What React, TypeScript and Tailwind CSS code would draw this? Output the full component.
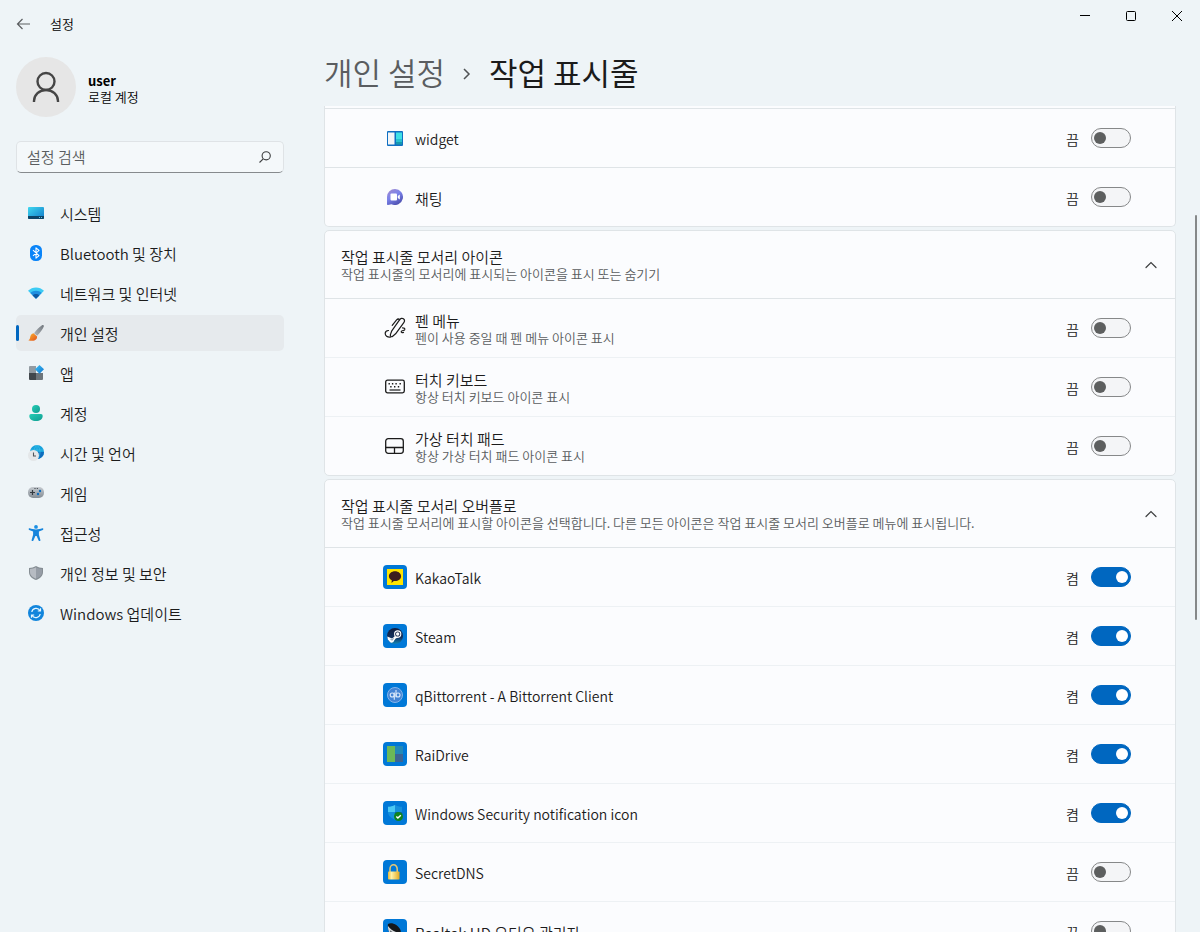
import { useId, useState } from "react";
import type { ReactNode } from "react";

function SystemIcon() {
  return (
    <svg width="16" height="16" viewBox="0 0 16 16">
      <defs>
        <linearGradient id="sys" x1="0" y1="0" x2="1" y2="1">
          <stop offset="0" stopColor="#3fd8f0" />
          <stop offset="1" stopColor="#1079c9" />
        </linearGradient>
      </defs>
      <rect y="2" width="16" height="12" rx="1" fill="url(#sys)" />
      <path d="M0 11h16v2a1 1 0 0 1-1 1H1a1 1 0 0 1-1-1z" fill="#0c4468" />
      <path d="M11 12h1v1h-1zM13 12h1v1h-1z" fill="#5fc6ea" />
    </svg>
  );
}

function BluetoothIcon() {
  return (
    <svg width="16" height="16" viewBox="0 0 16 16">
      <rect x="2" width="12" height="16" rx="5.5" fill="#0a84f8" />
      <path d="M5 5.2l6 5.4-3 2.6V2.8l3 2.6-6 5.4" fill="none" stroke="#fff" strokeWidth="1.1" strokeLinejoin="round" />
    </svg>
  );
}

function NetworkIcon() {
  return (
    <svg width="16" height="16" viewBox="0 0 16 16">
      <path d="M0 5.8C4.400 1.300 11.600 1.300 16 5.800L8 13.800z" fill="#3ccbf4" />
      <path d="M2.300 8.100c3.200-3.200 8.200-3.200 11.400 0L8 13.800z" fill="#1e8fe0" />
      <path d="M4.600 10.400c1.900-1.900 4.900-1.900 6.800 0L8 13.800z" fill="#0c59a4" />
    </svg>
  );
}

function BrushIcon() {
  return (
    <svg width="16" height="16" viewBox="0 0 16 16">
      <defs>
        <linearGradient id="handle" x1="1" y1="0" x2="0" y2="1">
          <stop offset="0" stopColor="#70767c" />
          <stop offset="1" stopColor="#b4b9be" />
        </linearGradient>
        <linearGradient id="bristle" x1="0" y1="0" x2="1" y2="1">
          <stop offset="0" stopColor="#fbb52f" />
          <stop offset="1" stopColor="#e2511c" />
        </linearGradient>
      </defs>
      <path d="M14 .3c1.200-.7 2.300.3 1.700 1.500-1.300 2.800-3.700 6.200-6.500 8.900L6 8.200C8.600 5 11.500 1.800 14 .3z" fill="url(#handle)" />
      <path d="M5.500 8.300l3.600 3.200c.2 2.400-1.800 4.300-4.600 4.300-1.800 0-3.300 0-4.200-.5 1.400-.6 1.700-1.800 1.900-3.200.3-2 1.500-3.500 3.300-3.800z" fill="url(#bristle)" />
    </svg>
  );
}

function AppsIcon() {
  return (
    <svg width="16" height="16" viewBox="0 0 16 16">
      <defs>
        <linearGradient id="diamond" x1="0" y1="0" x2="1" y2="1">
          <stop offset="0" stopColor="#3cc1f5" />
          <stop offset="1" stopColor="#0f74cf" />
        </linearGradient>
      </defs>
      <path d="M2 1h6v7H1V2a1 1 0 0 1 1-1z" fill="#929ba2" />
      <path d="M1 8h7v7H2a1 1 0 0 1-1-1z" fill="#41474c" />
      <path d="M8 8h7v6a1 1 0 0 1-1 1H8z" fill="#6d757b" />
      <path d="M11.500 0l4.500 4.300-4.500 4.500L7 4.300z" fill="url(#diamond)" />
    </svg>
  );
}

function AccountIcon() {
  return (
    <svg width="16" height="16" viewBox="0 0 16 16">
      <defs>
        <linearGradient id="acct" x1="0" y1="0" x2="1" y2="1">
          <stop offset="0" stopColor="#25cdb5" />
          <stop offset="1" stopColor="#109c91" />
        </linearGradient>
      </defs>
      <circle cx="8" cy="4" r="4" fill="url(#acct)" />
      <path d="M3 9h10a1.700 1.700 0 0 1 1.700 1.700C14.700 14 12 16 8 16s-6.700-2-6.700-5.300A1.700 1.700 0 0 1 3 9z" fill="url(#acct)" />
    </svg>
  );
}

function TimeIcon() {
  return (
    <svg width="16" height="16" viewBox="0 0 16 16">
      <circle cx="9" cy="7" r="7" fill="#17a2dc" />
      <path d="M16 7a7 7 0 0 1-7 7l1-7z" fill="#0f6cbd" />
      <path d="M3 5h12.500M9 0v14M9 0c4 3 4 11 0 14M9 0C5 3 5 11 9 14" fill="none" stroke="#3fc4e8" strokeWidth=".6" />
      <circle cx="5.500" cy="10.500" r="5.500" fill="#e4e7e9" />
      <path d="M5.500 7.500v3.500H8" fill="none" stroke="#4f555a" strokeWidth="1.100" />
    </svg>
  );
}

function GameIcon() {
  return (
    <svg width="16" height="16" viewBox="0 0 16 16">
      <defs>
        <linearGradient id="pad" x1="0" y1="0" x2="0" y2="1">
          <stop offset="0" stopColor="#c6cbd0" />
          <stop offset="1" stopColor="#858d95" />
        </linearGradient>
      </defs>
      <rect y="2" width="16" height="11" rx="5" fill="url(#pad)" />
      <path d="M2 7.500h5M4.500 5v5M6.500 3.500h1M8.800 3.500h1" stroke="#333a40" strokeWidth="1.200" />
      <circle cx="12" cy="6" r="1.200" fill="#0f6cbd" />
      <circle cx="10" cy="9" r="1.200" fill="#0f6cbd" />
    </svg>
  );
}

function AccessIcon() {
  return (
    <svg width="16" height="16" viewBox="0 0 16 16">
      <circle cx="8" cy="1.900" r="1.900" fill="#1b8fe3" />
      <path d="M1.700 3.300C3.500 3.800 5.600 4.500 8 4.500s4.500-.7 6.300-1.200c1.100-.3 1.500 1.200.5 1.600l-3.900 1.500v3.300l1.500 5.200c.3 1.200-1.400 1.700-1.800.6L8.600 11H7.400l-2 4.500c-.4 1.100-2.100.6-1.800-.6l1.500-5.200V6.400L1.200 4.900c-1-.4-.6-1.900.5-1.600z" fill="#1584dc" />
    </svg>
  );
}

function ShieldIcon() {
  return (
    <svg width="16" height="16" viewBox="0 0 16 16">
      <path d="M8 1c2 1.300 4.500 2 7 2v4c0 4-3 6.600-7 8-4-1.400-7-4-7-8V3c2.500 0 5-.7 7-2z" fill="#858d93" />
      <path d="M8 2.300V13.700C4.700 12.500 2 10.200 2 7V3.900c2 0 4.200-.5 6-1.600z" fill="#b6bbc2" />
      <path d="M8 2.300c1.800 1.100 4 1.600 6 1.600V7c0 3.200-2.700 5.500-6 6.700z" fill="#969da6" />
    </svg>
  );
}

function UpdateIcon() {
  return (
    <svg width="16" height="16" viewBox="0 0 16 16">
      <circle cx="8" cy="8" r="8" fill="#1285dc" />
      <path d="M3.800 7A4.400 4.400 0 0 1 12 5.700M12.500 3.300V6H9.800M12.200 9A4.400 4.400 0 0 1 4 10.300M3.500 12.700V10h2.700" fill="none" stroke="#e8f7ff" strokeWidth="1.200" />
    </svg>
  );
}

function WidgetIcon() {
  return (
    <svg width="16" height="16" viewBox="0 0 16 16">
      <rect y="1" width="16" height="15" rx="1" fill="#0f6fc2" />
      <rect x="1" y="2.500" width="6.500" height="12" fill="#f3f5f7" />
      <path d="M9 2.500h6V9H9z" fill="#3fe0e6" />
      <path d="M9 9h6v3H9z" fill="#27c0d0" />
      <path d="M9 12h6v2.500H9z" fill="#1598ae" />
    </svg>
  );
}

function ChatIcon() {
  return (
    <svg width="16" height="16" viewBox="0 0 16 16">
      <defs>
        <linearGradient id="chat" x1="0" y1="0" x2=".6" y2="1">
          <stop offset="0" stopColor="#a58acb" />
          <stop offset=".5" stopColor="#7b83eb" />
          <stop offset="1" stopColor="#4f52b2" />
        </linearGradient>
      </defs>
      <path d="M8 0a8 8 0 1 1-3.500 15.200L1 16c-.7.100-1-.3-1-1V8a8 8 0 0 1 8-8z" fill="url(#chat)" />
      <rect x="3.500" y="4.500" width="6.500" height="7" rx="1" fill="#fff" />
      <path d="M10.800 7l2-1.600v5.200l-2-1.600z" fill="#fff" />
    </svg>
  );
}

function PenIcon() {
  return (
    <svg width="22" height="22" viewBox="0 0 22 22" fill="none" stroke="#1b1b1b" strokeWidth="1.200" strokeLinecap="round" strokeLinejoin="round">
      <path d="M7 19.600c-.7-.5-.8-1.300-.5-2.200l1.300-3.600L15.700 2.700c1-1.500 2.600-1.700 3.700-.9 1.200.9 1.400 2.400.4 3.800l-8.200 11.200-2.900 2.400c-.6.500-1.200.7-1.700.4z" />
      <path d="M15.800 2.700c-1-.9-2.200-.9-3.200.2L8.200 8.300" />
      <path d="M4.500 13.500c-2 .2-3.300 1.300-3.300 2.900 0 2.300 2 4 5.200 3.700" />
      <path d="M18.500 10.800c1.600 0 2.700.8 2.200 1.900-.5 1-2.800.6-3.400 1.700-.4.900.8 1.500 2.200 1" />
    </svg>
  );
}

function KeyboardIcon() {
  return (
    <svg width="20" height="16" viewBox="0 0 20 16" fill="none" stroke="#1b1b1b">
      <rect x=".7" y="1.200" width="18.600" height="12.600" rx="1.800" strokeWidth="1.300" />
      <path d="M3.500 4.800h1.400M6.900 4.800h1.400M10.400 4.800h1.400M14.500 4.800h1.400M5.200 7.800h1.400M9 7.800h1.400M12.800 7.800h1.400" strokeWidth="1.500" />
      <path d="M4.500 11h11" strokeWidth="1.200" />
    </svg>
  );
}

function TouchpadIcon() {
  return (
    <svg width="20" height="16" viewBox="0 0 20 16" fill="none" stroke="#1b1b1b" strokeWidth="1.300">
      <rect x=".7" y=".7" width="17.600" height="14.600" rx="2.500" />
      <path d="M.7 9.500h17.600M9.500 9.500v5.800" />
    </svg>
  );
}

function Tile({ children }: { children: ReactNode }) {
  return (
    <span className="flex size-6 items-center justify-center rounded bg-[#0078d7]">
      <svg width="16" height="16" viewBox="0 0 16 16">{children}</svg>
    </span>
  );
}

const kakao = (
  <Tile>
    <path d="M0 0h16v16H0z" fill="#fee500" />
    <path d="M8 2.300c3.400 0 6.100 2.200 6.100 4.900S11.400 12.100 8 12.100l-1.200-.1-2.300 1.900.3-2.600C3 10.400 1.900 8.900 1.900 7.200c0-2.700 2.700-4.900 6.100-4.900z" fill="#3b1e1e" />
  </Tile>
);

const steam = (
  <Tile>
    <defs>
      <linearGradient id="steam" x1="0" y1="0" x2="0" y2="1">
        <stop offset="0" stopColor="#111d3e" />
        <stop offset=".6" stopColor="#12315f" />
        <stop offset="1" stopColor="#1387b8" />
      </linearGradient>
    </defs>
    <circle cx="8" cy="8" r="8" fill="url(#steam)" />
    <path d="M.3 8.500l4.700 2 2.300-1.700 1.500-3.600 4.200 3.600-4.300 1.800-1.500 2a2.600 2.600 0 0 1-5 .3L.8 11.500z" fill="#fff" />
    <circle cx="10.700" cy="6" r="3.100" fill="#16264b" stroke="#fff" strokeWidth="1.100" />
    <circle cx="10.700" cy="6" r="1.700" fill="#fff" />
    <path d="M3.500 11.300l1.300.6a1.200 1.200 0 0 0 1.300-1.700" fill="none" stroke="#35587f" strokeWidth=".7" />
  </Tile>
);

const qbittorrent = (
  <Tile>
    <circle cx="8" cy="8" r="7.500" fill="#4384d4" stroke="#86b5ea" />
    <g fill="none" stroke="#dceafa" strokeWidth="1.100">
      <circle cx="5.200" cy="8" r="2" />
      <path d="M7.300 5.600v7.200M9 3v7.200" />
      <circle cx="11" cy="8" r="2" />
    </g>
  </Tile>
);

const raidrive = (
  <Tile>
    <path d="M0 0h8v16H0z" fill="#6cb957" />
    <path d="M8 0h8v8H8z" fill="#2389b6" />
    <path d="M8 8h8v8H8z" fill="#3d6594" />
  </Tile>
);

const security = (
  <Tile>
    <path d="M8 0c2 1.200 4.300 1.800 7 1.800V7c0 3.800-3 6-7 7.500C4 13 1 10.800 1 7V1.800C3.700 1.800 6 1.200 8 0z" fill="#1590dc" />
    <path d="M8 0v7H1V1.800C3.700 1.800 6 1.200 8 0z" fill="#4ac8f3" />
    <path d="M8 7h7c0 3.800-3 6-7 7.500z" fill="#0c63b0" />
    <circle cx="11.500" cy="11.500" r="4.500" fill="#0f8420" />
    <path d="M9.300 11.500l1.600 1.600 2.900-2.900" fill="none" stroke="#fff" strokeWidth="1.400" />
  </Tile>
);

const secretDns = (
  <Tile>
    <defs>
      <linearGradient id="lock" x1="0" y1="0" x2="1" y2="0">
        <stop offset="0" stopColor="#e9b832" />
        <stop offset=".3" stopColor="#fff3a8" />
        <stop offset="1" stopColor="#e2a91f" />
      </linearGradient>
    </defs>
    <path d="M3 8V5a3.600 4.200 0 0 1 7.200 0v3" fill="none" stroke="#e8c873" strokeWidth="1.500" />
    <rect x="1" y="7.500" width="11.500" height="8" rx=".8" fill="url(#lock)" />
  </Tile>
);

const realtek = (
  <Tile>
    <path d="M1 1c4-2 10 1 12.500 6L15 16H7C3 12 0 5 1 1z" fill="#15181b" />
    <path d="M1 3c2 3 5 5 8 6l-1 7C4 13 .5 8 1 3z" fill="#d5d9dc" />
    <path d="M3 7.500c1 0 3 2 4 4l-1 2C4.500 12 3 9.500 3 7.500z" fill="#5b6166" />
  </Tile>
);

const navItems: { label: string; icon: ReactNode; active?: boolean }[] = [
  { label: "시스템", icon: <SystemIcon /> },
  { label: "Bluetooth 및 장치", icon: <BluetoothIcon /> },
  { label: "네트워크 및 인터넷", icon: <NetworkIcon /> },
  { label: "개인 설정", icon: <BrushIcon />, active: true },
  { label: "앱", icon: <AppsIcon /> },
  { label: "계정", icon: <AccountIcon /> },
  { label: "시간 및 언어", icon: <TimeIcon /> },
  { label: "게임", icon: <GameIcon /> },
  { label: "접근성", icon: <AccessIcon /> },
  { label: "개인 정보 및 보안", icon: <ShieldIcon /> },
  { label: "Windows 업데이트", icon: <UpdateIcon /> },
];

type RowProps = { icon: ReactNode; title: string; description?: string; on?: boolean; strong?: boolean };

function Row({ icon, title, description, on = false, strong = false }: RowProps) {
  const id = useId();
  const [checked, setChecked] = useState(on);
  const titleSize = /[가-힣]/.test(title) ? "text-[15px]" : "text-[14px]";
  return (
    <div className={`flex h-[59px] items-center gap-2 border-t pr-11 pl-[58px] ${strong ? "border-[#dfe4e7]" : "border-[#edf1f4]"}`}>
      <span className="flex size-6 shrink-0 items-center justify-center">{icon}</span>
      <label htmlFor={id} className="flex flex-1 flex-col pt-0.5">
        <span className={`${titleSize} leading-[17px] text-[#1b1b1b]`}>{title}</span>
        {description && <span className="text-[13px] leading-[17px] text-[#5a5d60]">{description}</span>}
      </label>
      <span className="pt-0.5 text-[14px] leading-[17px] text-[#1b1b1b]">{checked ? "켬" : "끔"}</span>
      <input
        id={id}
        type="checkbox"
        role="switch"
        checked={checked}
        onChange={(e) => setChecked(e.target.checked)}
        className="ml-1 flex h-5 w-10 shrink-0 appearance-none items-center rounded-full border border-[#868889] bg-[#f4f5f7] px-0.5 before:size-3 before:rounded-full before:bg-[#5d5f5f] checked:justify-end checked:border-[#0067c0] checked:bg-[#0067c0] checked:before:bg-white"
      />
    </div>
  );
}

function Group({ title, description, children }: { title: string; description: string; children: ReactNode }) {
  const [open, setOpen] = useState(true);
  return (
    <section className="rounded-[5px] border border-[#dfe4e7] bg-[#fbfcfe]">
      <button type="button" onClick={() => setOpen(!open)} aria-expanded={open} className="flex h-[67px] w-full items-center justify-between pr-[18px] pl-4 text-left">
        <span className="flex flex-col">
          <span className="text-[15px] leading-[17px] text-[#1b1b1b]">{title}</span>
          <span className="text-[13px] leading-[17px] text-[#5a5d60]">{description}</span>
        </span>
        <svg width="12" height="12" viewBox="0 0 12 12" fill="none" stroke="#3d3f40" strokeWidth="1.200" strokeLinecap="round">
          <path d="M1 8.500l5-5 5 5" />
        </svg>
      </button>
      {open && children}
    </section>
  );
}

export default function App() {
  return (
    <div className="flex h-screen overflow-hidden bg-[#eef4f7] font-['Noto_Sans_CJK_KR',sans-serif] font-[350] text-[#1b1b1b]">
      <aside className="flex w-[300px] shrink-0 flex-col px-4">
        <div className="flex h-12 items-center gap-5">
          <button type="button" aria-label="뒤로" className="flex w-3.5 justify-center">
            <svg width="14" height="12" viewBox="0 0 14 12" className="shrink-0" fill="none" stroke="#5b5e60" strokeWidth="1.200">
              <path d="M14 6H2M6.500 1L1.500 6l5 5" />
            </svg>
          </button>
          <span className="text-[13px] leading-4 text-black">설정</span>
        </div>
        <div className="mt-[9px] flex h-[60px] items-center gap-3">
          <span className="flex size-[60px] items-center justify-center rounded-full bg-[#e6e6e6]">
            <svg width="28" height="32" viewBox="0 0 28 32" fill="none" stroke="#454545" strokeWidth="2.400">
              <circle cx="14" cy="10.500" r="8.500" />
              <path d="M2 31v-1a12 11 0 0 1 24 0v1" />
            </svg>
          </span>
          <span className="flex flex-col pt-1 text-[13px] leading-4 text-black">
            <span className="font-bold">user</span>
            <span>로컬 계정</span>
          </span>
        </div>
        <label className="mt-6 flex h-8 shrink-0 items-center rounded-[5px] border border-[#dfe3e6] border-b-[#868a8d] bg-[#f4f8fa] pr-3 pl-2.5">
          <input type="text" aria-label="설정 검색" placeholder="설정 검색" className="min-w-0 flex-1 bg-transparent pb-0.5 text-[15px] leading-[17px] outline-none placeholder:text-[#5a5d60]" />
          <svg width="12" height="12" viewBox="0 0 12 12" fill="none" stroke="#3d3f40" strokeWidth="1.100">
            <circle cx="7.200" cy="4.800" r="4.100" />
            <path d="M4.200 7.800L.5 11.500" />
          </svg>
        </label>
        <nav className="mt-[22px] flex flex-col gap-1">
          {navItems.map((item) => (
            <a key={item.label} href="#" aria-current={item.active ? "page" : undefined} className={`relative flex h-9 items-center gap-4 rounded-[5px] pl-3 ${item.active ? "bg-[#e6eaed]" : ""}`}>
              {item.active && <span className="absolute left-0 h-4 w-[3px] rounded-full bg-[#0067c0]" />}
              {item.icon}
              <span className="text-[15px] leading-[17px]">{item.label}</span>
            </a>
          ))}
        </nav>
      </aside>

      <main className="relative flex min-w-0 flex-1 flex-col pr-6 pl-6">
        <div className="-mr-6 flex h-8 shrink-0 justify-end">
          <button type="button" aria-label="최소화" className="flex w-[46px] items-center justify-center">
            <svg width="10" height="10" viewBox="0 0 10 10" stroke="#000"><path d="M0 4.500h10" /></svg>
          </button>
          <button type="button" aria-label="최대화" className="flex w-[46px] items-center justify-center">
            <svg width="10" height="10" viewBox="0 0 10 10" fill="none" stroke="#000"><rect x=".5" y=".5" width="9" height="9" rx="1" /></svg>
          </button>
          <button type="button" aria-label="닫기" className="flex w-[46px] items-center justify-center">
            <svg width="10" height="10" viewBox="0 0 10 10" stroke="#000"><path d="M0 0l10 10M10 0L0 10" /></svg>
          </button>
        </div>
        <h1 className="mb-3.5 flex h-[60px] shrink-0 items-center pt-5 text-[31px] leading-10">
          <a href="#" className="text-[#5a5d60]">개인 설정</a>
          <svg width="8" height="12" viewBox="0 0 8 12" className="mx-[18px] mt-1" fill="none" stroke="#505355" strokeWidth="1.500">
            <path d="M1 1l5 5-5 5" />
          </svg>
          <span className="font-normal">작업 표시줄</span>
        </h1>
        <div className="flex min-h-0 flex-1 flex-col overflow-hidden">
          <div className="flex shrink-0 flex-col gap-[3px]">
            <section className="rounded-b-[5px] border-x border-b border-[#dfe4e7] bg-[#fbfcfe] pt-0.5">
              <Row strong icon={<WidgetIcon />} title="widget" />
              <Row strong icon={<ChatIcon />} title="채팅" />
            </section>
            <Group title="작업 표시줄 모서리 아이콘" description="작업 표시줄의 모서리에 표시되는 아이콘을 표시 또는 숨기기">
              <Row strong icon={<PenIcon />} title="펜 메뉴" description="펜이 사용 중일 때 펜 메뉴 아이콘 표시" />
              <Row icon={<KeyboardIcon />} title="터치 키보드" description="항상 터치 키보드 아이콘 표시" />
              <Row icon={<TouchpadIcon />} title="가상 터치 패드" description="항상 가상 터치 패드 아이콘 표시" />
            </Group>
            <Group title="작업 표시줄 모서리 오버플로" description="작업 표시줄 모서리에 표시할 아이콘을 선택합니다. 다른 모든 아이콘은 작업 표시줄 모서리 오버플로 메뉴에 표시됩니다.">
              <Row strong on icon={kakao} title="KakaoTalk" />
              <Row on icon={steam} title="Steam" />
              <Row on icon={qbittorrent} title="qBittorrent - A Bittorrent Client" />
              <Row on icon={raidrive} title="RaiDrive" />
              <Row on icon={security} title="Windows Security notification icon" />
              <Row icon={secretDns} title="SecretDNS" />
              <Row icon={realtek} title="Realtek HD 오디오 관리자" />
            </Group>
          </div>
        </div>
        <span className="absolute top-[215px] right-[3px] h-[405px] w-0.5 rounded-full bg-[#858889]" />
      </main>
    </div>
  );
}
